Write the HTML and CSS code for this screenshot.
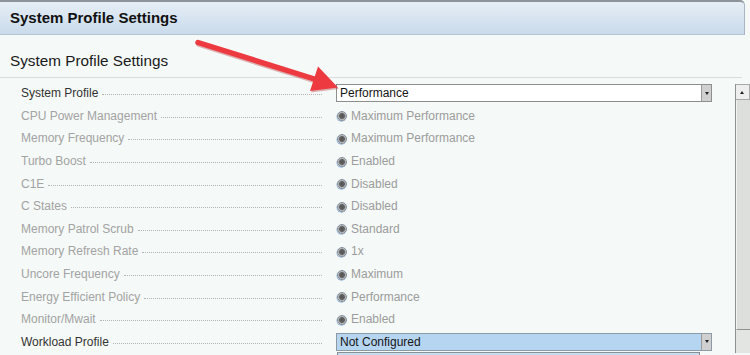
FILE: index.html
```html
<!DOCTYPE html>
<html lang="en">
<head>
  <meta charset="UTF-8">
  <title>System Profile Settings</title>
  <link rel="stylesheet" href="styles.css">
</head>
<body>
  <div class="page-header">System Profile Settings</div>
  <div class="section-title">System Profile Settings</div>

  <div class="settings">
    <div class="rows">
      <div class="row">
        <div class="label active">System Profile</div>
        <div class="select">
          <span>Performance</span>
          <span class="drop"></span>
        </div>
      </div>
      <div class="row">
        <div class="label">CPU Power Management</div>
        <div class="value"><span class="radio"></span>Maximum Performance</div>
      </div>
      <div class="row">
        <div class="label">Memory Frequency</div>
        <div class="value"><span class="radio"></span>Maximum Performance</div>
      </div>
      <div class="row">
        <div class="label">Turbo Boost</div>
        <div class="value"><span class="radio"></span>Enabled</div>
      </div>
      <div class="row">
        <div class="label">C1E</div>
        <div class="value"><span class="radio"></span>Disabled</div>
      </div>
      <div class="row">
        <div class="label">C States</div>
        <div class="value"><span class="radio"></span>Disabled</div>
      </div>
      <div class="row">
        <div class="label">Memory Patrol Scrub</div>
        <div class="value"><span class="radio"></span>Standard</div>
      </div>
      <div class="row">
        <div class="label">Memory Refresh Rate</div>
        <div class="value"><span class="radio"></span>1x</div>
      </div>
      <div class="row">
        <div class="label">Uncore Frequency</div>
        <div class="value"><span class="radio"></span>Maximum</div>
      </div>
      <div class="row">
        <div class="label">Energy Efficient Policy</div>
        <div class="value"><span class="radio"></span>Performance</div>
      </div>
      <div class="row">
        <div class="label">Monitor/Mwait</div>
        <div class="value"><span class="radio"></span>Enabled</div>
      </div>
      <div class="row">
        <div class="label active">Workload Profile</div>
        <div class="select focused">
          <span>Not Configured</span>
          <span class="drop"></span>
          <div class="drop-list"></div>
        </div>
      </div>
    </div>

    <div class="scrollbar">
      <div class="scroll-btn"></div>
      <div class="scroll-thumb"></div>
      <div class="scroll-track"></div>
    </div>
  </div>

  <!-- callout arrow pointing at the System Profile dropdown -->
  <svg class="callout" width="750" height="355" viewBox="0 0 750 355">
    <line x1="198" y1="42.5" x2="316" y2="79.5" stroke="#b02a2e" stroke-width="6" stroke-linecap="round" opacity="0.35" transform="translate(1,1.5)"/>
    <polygon points="338,87.5 310,91 318,66.5" fill="#b02a2e" opacity="0.35" transform="translate(1,1.5)"/>
    <line x1="198" y1="42.5" x2="316" y2="79.5" stroke="#ec3a40" stroke-width="5.5" stroke-linecap="round"/>
    <polygon points="338,87.5 310,91 318,66.5" fill="#ec3a40"/>
  </svg>
</body>
</html>
```

FILE: styles.css
```css
html, body {
  height: 355px;
  overflow: hidden;
}

body {
  margin: 0;
  background-color: #f5f9f7;
  font-family: 'Liberation Sans', Arial, sans-serif;
  color: #222222;
  position: relative;
}

.page-header {
  width: 745px;
  height: 35px;
  box-sizing: border-box;
  border-top: 2px solid #8e9499;
  border-right: 1px solid #a9b6c2;
  border-bottom: 1px solid #b4c6d6;
  border-top-right-radius: 5px;
  background: linear-gradient(#e6eef6, #c9dbeb);
  padding-left: 10px;
  line-height: 32px;
  font-size: 15px;
  font-weight: 700;
  color: #111111;
}

.section-title {
  margin-right: 8px;
  padding: 16px 0 6px 10px;
  line-height: 20px;
  font-size: 15.3px;
  color: #1a1a1a;
  border-bottom: 1px solid #d9dedb;
}

.settings {
  display: flex;
}

.rows {
  flex: 1;
  padding-top: 4px;
}

.row {
  display: grid;
  grid-template-columns: 301px 376px;
  column-gap: 14px;
  padding-left: 21px;
  height: 22.6px;
  align-items: center;
  font-size: 12px;
}

.label {
  display: flex;
  align-items: center;
  color: #a3a3a3;
  white-space: nowrap;
}

.label.active {
  color: #333333;
}

.label::after {
  content: "";
  flex: 1;
  height: 0;
  margin: 3px 0 0 4px;
  border-bottom: 1px dotted #b3b3b3;
}

.value {
  display: flex;
  align-items: center;
  color: #9c9c9c;
  white-space: nowrap;
}

.radio {
  width: 8px;
  height: 8px;
  margin: 1px 4px 0 1px;
  border-radius: 50%;
  border: 1px solid #808c9a;
  background: radial-gradient(circle, #555555 0, #616161 2.5px, #a0a0a0 3.2px, #d0d0d0 4px);
  box-shadow: -0.5px 0.8px 0 #8fb0d8;
}

.select {
  position: relative;
  height: 18px;
  box-sizing: border-box;
  border: 1px solid #8e8e8e;
  background-color: #ffffff;
  display: flex;
  align-items: center;
  padding-left: 3px;
  color: #151515;
}

.select.focused {
  background-color: #b5d5f1;
  border-color: #8c9aa8;
}

.drop {
  margin-left: auto;
  width: 9px;
  height: 16px;
  background-color: #d0d0d0;
  border-left: 1px solid #9a9a9a;
  display: flex;
  align-items: center;
  justify-content: center;
}

.drop::after {
  content: "";
  border-left: 2.5px solid transparent;
  border-right: 2.5px solid transparent;
  border-top: 3px solid #222222;
}

.drop-list {
  position: absolute;
  top: 18px;
  left: 0;
  width: 363px;
  height: 10px;
  box-sizing: border-box;
  border: 1px solid #8a8f96;
  background-color: #c6ddf1;
}

.scrollbar {
  width: 14px;
  margin-top: 6px;
  display: flex;
  flex-direction: column;
  border-left: 1px solid #8f918f;
}

.scroll-btn {
  height: 14px;
  background-color: #eeeeee;
  border: 1px solid #a8a8a8;
  border-left: none;
  display: flex;
  align-items: center;
  justify-content: center;
}

.scroll-btn::after {
  content: "";
  border-left: 2.5px solid transparent;
  border-right: 2.5px solid transparent;
  border-bottom: 3px solid #222222;
  margin-left: -2px;
}

.scroll-thumb {
  height: 229px;
  background-color: #dcdfdc;
  border-bottom: 1px solid #8f918f;
  border-left: 1px solid #f2f2f2;
}

.scroll-track {
  flex: 1;
  background-color: #e3e5e3;
}

.callout {
  position: absolute;
  top: 0;
  left: 0;
  pointer-events: none;
}
```
